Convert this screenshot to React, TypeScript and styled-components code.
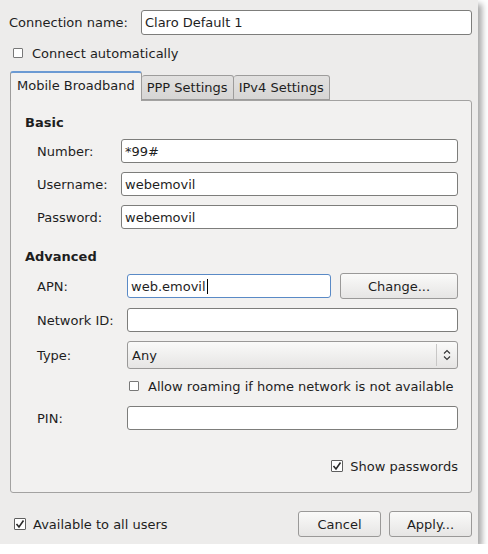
import React from "react";
import styled, { createGlobalStyle } from "styled-components";

const Global = createGlobalStyle`
  html, body { margin: 0; padding: 0; background: #ffffff; }
  body { font-family: "DejaVu Sans", "Liberation Sans", sans-serif; font-size: 13px; color: #1e1e1e; }
  * { box-sizing: border-box; }
`;

const Window = styled.div`
  width: 478px;
  height: 544px;
  background: #edeceb;
  display: flex;
  flex-direction: column;
  padding: 10px 6px 6px 9px;
  box-shadow: 4px 4px 6px rgba(0, 0, 0, 0.35);
`;

const NameRow = styled.div`
  display: flex;
  align-items: center;
  gap: 13px;
`;

const Label = styled.span`
  white-space: nowrap;
`;

const TextField = styled.div<{ $focus?: boolean; $h?: number }>`
  flex: 1;
  height: ${(p) => p.$h ?? 24}px;
  background: #ffffff;
  border: 1px solid ${(p) => (p.$focus ? "#5a8ac6" : "#7d7d7b")};
  border-radius: 3px;
  padding-left: 3px;
  display: flex;
  align-items: center;
  white-space: nowrap;
`;

const Caret = styled.span`
  display: inline-block;
  width: 1px;
  height: 15px;
  background: #000;
  margin-left: 1px;
`;

const CheckRow = styled.div<{ $mt?: number; $ml?: number; $justify?: string; $gap?: number }>`
  display: flex;
  align-items: center;
  gap: ${(p) => p.$gap ?? 7}px;
  height: 16px;
  white-space: nowrap;
  margin-top: ${(p) => p.$mt ?? 0}px;
  margin-left: ${(p) => p.$ml ?? 0}px;
  justify-content: ${(p) => p.$justify ?? "flex-start"};
`;

const BoxArea = styled.span`
  width: 12px;
  height: 12px;
  display: inline-flex;
  align-items: center;
  justify-content: center;
  flex-shrink: 0;
`;

const Box = styled.span<{ $checked?: boolean }>`
  width: ${(p) => (p.$checked ? 12 : 10)}px;
  height: ${(p) => (p.$checked ? 12 : 10)}px;
  border: 1px solid ${(p) => (p.$checked ? "#5f5f5f" : "#787878")};
  background: #ffffff;
  border-radius: 1px;
  display: inline-flex;
  align-items: center;
  justify-content: center;
  flex-shrink: 0;
`;

const Tabs = styled.div`
  display: flex;
  align-items: flex-end;
  margin-top: 10px;
  margin-left: 1px;
  height: 29px;
`;

const Tab = styled.div<{ $active?: boolean }>`
  height: ${(p) => (p.$active ? 30 : 25)}px;
  padding: 0 ${(p) => (p.$active ? 6 : 5)}px;
  display: flex;
  align-items: center;
  white-space: nowrap;
  margin-bottom: ${(p) => (p.$active ? -1 : 0)}px;
  position: relative;
  z-index: ${(p) => (p.$active ? 1 : 0)};
  border: 1px solid #9d9c9b;
  border-bottom: ${(p) => (p.$active ? "none" : "1px solid #9d9c9b")};
  border-top: ${(p) => (p.$active ? "2px solid #6b9ad3" : "1px solid #9d9c9b")};
  border-left: ${(p) => (p.$active ? "1px solid #9d9c9b" : "none")};
  border-radius: 3px 3px 0 0;
  background: ${(p) => (p.$active ? "#f2f1f0" : "linear-gradient(#e2e1e0, #d6d5d4)")};
  padding-bottom: ${(p) => (p.$active ? 4 : 0)}px;
`;

const Panel = styled.div`
  margin-left: 1px;
  width: 462px;
  height: 393px;
  background: #f2f1f0;
  border: 1px solid #a3a2a1;
  border-radius: 0 3px 3px 3px;
  padding: 14px 13px 0 14px;
  display: flex;
  flex-direction: column;
`;

const Heading = styled.div<{ $mt?: number }>`
  font-weight: bold;
  height: 16px;
  line-height: 16px;
  margin-top: ${(p) => p.$mt ?? 0}px;
`;

const FormGrid = styled.div<{ $labelW: number; $mt?: number }>`
  display: grid;
  grid-template-columns: ${(p) => p.$labelW}px 1fr;
  row-gap: 9px;
  align-items: center;
  margin-top: ${(p) => p.$mt ?? 0}px;
  margin-left: 12px;
`;

const SplitField = styled.div`
  display: flex;
  gap: 9px;
  align-items: center;
`;

const Button = styled.div<{ $w?: number; $h?: number }>`
  width: ${(p) => (p.$w ? `${p.$w}px` : "auto")};
  height: ${(p) => p.$h ?? 26}px;
  border: 1px solid #9a9998;
  border-radius: 3px;
  background: linear-gradient(#fafaf9, #e6e5e4);
  display: flex;
  align-items: center;
  justify-content: center;
  white-space: nowrap;
`;

const Combo = styled.div`
  height: 28px;
  border: 1px solid #9a9998;
  border-radius: 3px;
  background: linear-gradient(#fafaf9, #e6e5e4);
  display: flex;
  align-items: center;
`;

const ComboText = styled.span`
  flex: 1;
  padding-left: 4px;
`;

const ComboArrow = styled.span`
  width: 21px;
  height: 22px;
  border-left: 1px solid #c8c7c6;
  display: flex;
  align-items: center;
  justify-content: center;
`;

const SpanAll = styled.div<{ $mb?: number }>`
  grid-column: 2;
  margin-bottom: ${(p) => p.$mb ?? 0}px;
`;

const Footer = styled.div`
  display: flex;
  align-items: center;
  margin-top: 18px;
  height: 26px;
  padding-left: 5px;
`;

const FooterButtons = styled.div`
  margin-left: auto;
  display: flex;
  gap: 8px;
`;

const Check = () => (
  <svg width="10" height="10" viewBox="0 0 10 10">
    <polyline points="1.5,5 4,8 8.5,1.5" fill="none" stroke="#2a2a2a" strokeWidth="1.6" />
  </svg>
);

const CheckBox = ({ checked }: { checked?: boolean }) => (
  <BoxArea>
    <Box $checked={checked}>{checked ? <Check /> : null}</Box>
  </BoxArea>
);

export default function App() {
  return (
    <>
      <Global />
      <Window>
        <NameRow>
          <Label>Connection name:</Label>
          <TextField $h={25}>Claro Default 1</TextField>
        </NameRow>
        <CheckRow $mt={10} $ml={3} $gap={8}>
          <CheckBox />
          <span>Connect automatically</span>
        </CheckRow>
        <Tabs>
          <Tab $active>Mobile Broadband</Tab>
          <Tab>PPP Settings</Tab>
          <Tab>IPv4 Settings</Tab>
        </Tabs>
        <Panel>
          <Heading>Basic</Heading>
          <FormGrid $labelW={84} $mt={8}>
            <Label>Number:</Label>
            <TextField>*99#</TextField>
            <Label>Username:</Label>
            <TextField>webemovil</TextField>
            <Label>Password:</Label>
            <TextField>webemovil</TextField>
          </FormGrid>
          <Heading $mt={20}>Advanced</Heading>
          <FormGrid $labelW={90} $mt={8}>
            <Label>APN:</Label>
            <SplitField>
              <TextField $focus>
                web.emovil
                <Caret />
              </TextField>
              <Button $w={118}>Change...</Button>
            </SplitField>
            <Label>Network ID:</Label>
            <TextField />
            <Label>Type:</Label>
            <Combo>
              <ComboText>Any</ComboText>
              <ComboArrow>
                <svg width="8" height="12" viewBox="0 0 8 12">
                  <polyline points="1,4.5 4,1.5 7,4.5" fill="none" stroke="#333" strokeWidth="1.1" />
                  <polyline points="1,7.5 4,10.5 7,7.5" fill="none" stroke="#333" strokeWidth="1.1" />
                </svg>
              </ComboArrow>
            </Combo>
            <SpanAll $mb={3}>
              <CheckRow $ml={1} $gap={8}>
                <CheckBox />
                <span>Allow roaming if home network is not available</span>
              </CheckRow>
            </SpanAll>
            <Label>PIN:</Label>
            <TextField />
          </FormGrid>
          <CheckRow $mt={28} $justify="flex-end">
            <CheckBox checked />
            <span>Show passwords</span>
          </CheckRow>
        </Panel>
        <Footer>
          <CheckRow>
            <CheckBox checked />
            <span>Available to all users</span>
          </CheckRow>
          <FooterButtons>
            <Button $w={83}>Cancel</Button>
            <Button $w={83}>Apply...</Button>
          </FooterButtons>
        </Footer>
      </Window>
    </>
  );
}
